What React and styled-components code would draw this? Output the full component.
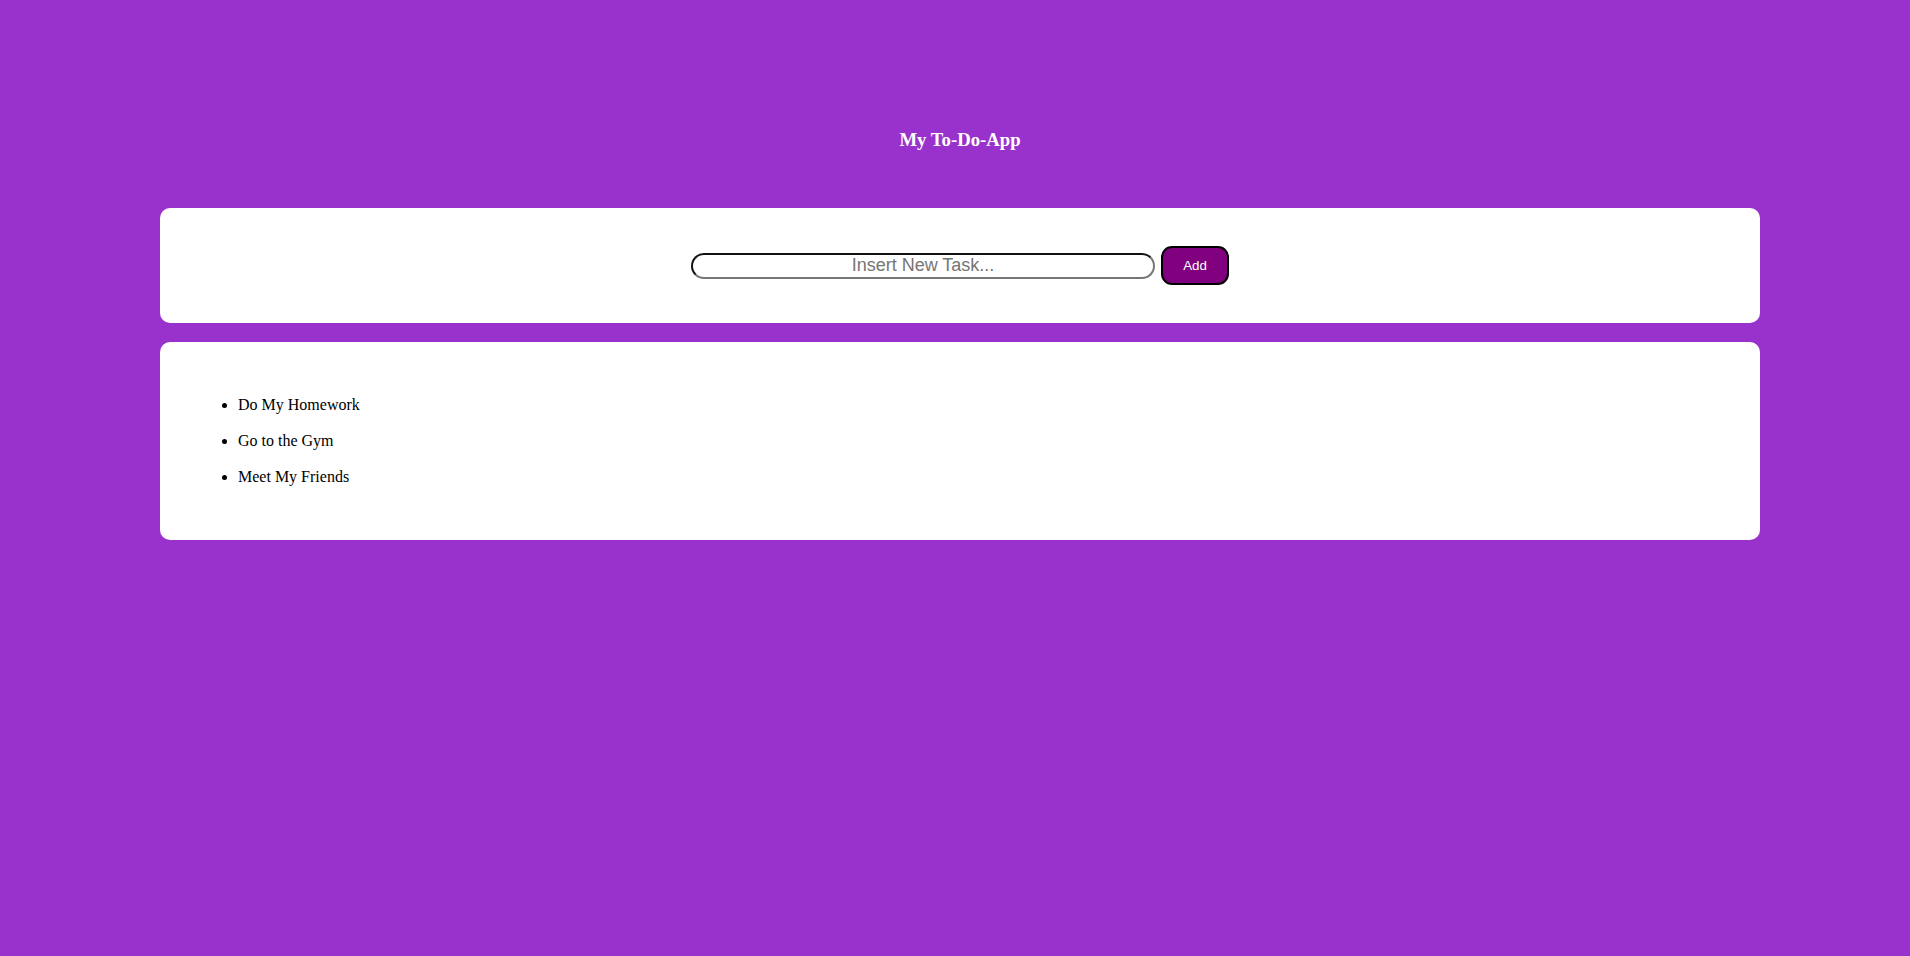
import React, { useState } from "react";
import styled, { createGlobalStyle } from "styled-components";

const GlobalStyle = createGlobalStyle`
  body {
    margin: 0;
    background: #9932cc;
    font-family: "Liberation Serif", "Times New Roman", serif;
  }
`;

const Page = styled.div`
  width: 1600px;
  margin-left: 160px;
`;
const Header = styled.header`
  padding: 129px 0 57px;
  text-align: center;
`;
const Title = styled.h3`
  margin: 0;
  font-size: 18.72px;
  line-height: 22px;
  font-weight: bold;
  color: #fff;
`;
const Card = styled.section`
  background: #fff;
  border-radius: 10px;
  padding: 38px;
  margin-bottom: 19px;
`;
const Form = styled.form`
  display: flex;
  align-items: center;
  justify-content: center;
  gap: 6px;
`;
const Input = styled.input`
  box-sizing: border-box;
  width: 464px;
  height: 26px;
  padding: 0 4px;
  border: 2px solid;
  border-color: #111 #767676 #767676 #111;
  border-radius: 13px;
  font-family: "Liberation Sans", Arial, sans-serif;
  font-size: 18px;
  text-align: center;
  outline: none;

  &::placeholder {
    color: #757575;
  }
`;
const Button = styled.button`
  box-sizing: border-box;
  width: 68px;
  height: 39px;
  border: 2px solid #000;
  border-radius: 11px;
  background: #800080;
  color: #fff;
  font-family: "Liberation Sans", Arial, sans-serif;
  font-size: 13.33px;
  cursor: pointer;
`;
const List = styled.ul`
  margin: 16px 0;
  padding-left: 40px;
`;
const Item = styled.li`
  font-size: 16px;
  line-height: 18px;
  margin-bottom: 18px;
  color: #000;

  &:last-child {
    margin-bottom: 0;
  }
`;

export default function App() {
  const [tasks, setTasks] = useState([
    "Do My Homework",
    "Go to the Gym",
    "Meet My Friends",
  ]);
  const [text, setText] = useState("");

  const addTask = (e) => {
    e.preventDefault();
    if (!text.trim()) return;
    setTasks([...tasks, text.trim()]);
    setText("");
  };

  return (
    <>
      <GlobalStyle />
      <Page>
        <Header>
          <Title>My To-Do-App</Title>
        </Header>
        <Card>
          <Form onSubmit={addTask}>
            <Input
              placeholder="Insert New Task..."
              value={text}
              onChange={(e) => setText(e.target.value)}
            />
            <Button type="submit">Add</Button>
          </Form>
        </Card>
        <Card>
          <List>
            {tasks.map((t, i) => (
              <Item key={i}>{t}</Item>
            ))}
          </List>
        </Card>
      </Page>
    </>
  );
}
